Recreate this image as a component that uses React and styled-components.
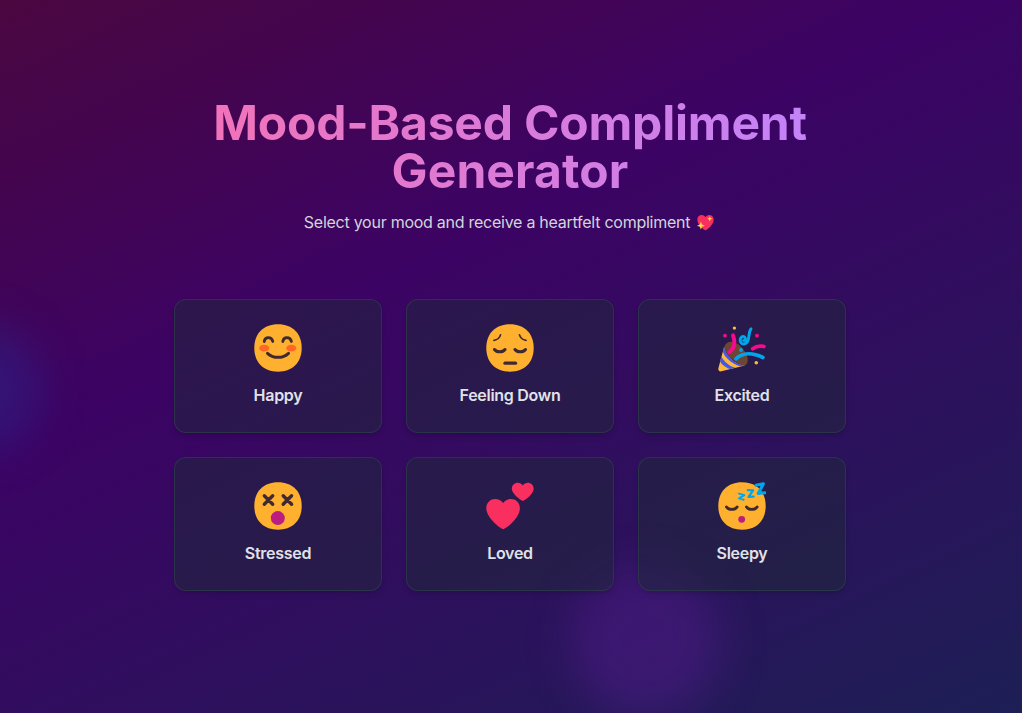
import React from "react";
import styled, { createGlobalStyle } from "styled-components";

const GlobalStyle = createGlobalStyle`
  *, *::before, *::after { box-sizing: border-box; }
  body { margin: 0; font-family: Inter, "Liberation Sans", sans-serif; }
  h1, p { margin: 0; }
`;

const Page = styled.div`
  position: relative;
  display: flex;
  flex-direction: column;
  align-items: center;
  height: 713px;
  padding-top: 99px;
  overflow: hidden;
  background: linear-gradient(155deg, #4a0740 0%, #3c0364 38%, #1d1f55 100%);
`;

const Glow = styled.div`
  position: absolute;
  left: ${(p) => p.$x}px;
  top: ${(p) => p.$y}px;
  width: ${(p) => p.$size}px;
  height: ${(p) => p.$size}px;
  border-radius: 50%;
  background: ${(p) => p.$color};
  filter: blur(${(p) => p.$blur}px);
`;

const Content = styled.main`
  position: relative;
  display: flex;
  flex-direction: column;
  align-items: center;
  width: 672px;
  margin-right: 2px;
`;

const Title = styled.h1`
  width: 100%;
  font-size: 48px;
  line-height: 48px;
  font-weight: 700;
  text-align: center;
  color: transparent;
  background: linear-gradient(to right, #f472b6, #c084fc);
  background-clip: text;
  -webkit-background-clip: text;
`;

const TitleLine = styled.span`
  display: block;
  white-space: nowrap;
  letter-spacing: ${(p) => p.$spacing}px;
`;

const Subtitle = styled.p`
  display: flex;
  align-items: center;
  gap: 7px;
  margin: 15px 2px 0 0;
  font-size: 16px;
  line-height: 24px;
  letter-spacing: -0.26px;
  white-space: nowrap;
  color: #d1d5db;
`;

const Grid = styled.div`
  display: grid;
  grid-template-columns: repeat(3, 208px);
  gap: 24px;
  margin-top: 65px;
`;

const Card = styled.button`
  display: flex;
  flex-direction: column;
  align-items: center;
  height: 134px;
  padding: 24px 0 0;
  border: 1px solid rgba(45, 62, 72, 0.72);
  border-radius: 12px;
  background: rgba(31, 41, 57, 0.52);
  box-shadow: 0 4px 6px -1px rgba(0, 0, 0, 0.1), 0 2px 4px -2px rgba(0, 0, 0, 0.1);
  font-family: inherit;
`;

const Label = styled.span`
  margin-top: 11px;
  font-size: 16px;
  line-height: 24px;
  font-weight: 600;
  letter-spacing: -0.28px;
  color: #e0e2e8;
`;

const Emoji = styled.svg`
  display: block;
  width: ${(p) => p.$size}px;
  height: ${(p) => p.$size}px;
  flex: none;
`;

const Face = () => (
  <path d="M24 .3C38.5.3 47.7 9.5 47.7 24S38.5 47.7 24 47.7.3 38.5.3 24 9.5.3 24 .3Z" fill="#ffb02e" />
);
const ink = { fill: "none", stroke: "#402a32", strokeLinecap: "round", strokeLinejoin: "round" };

const Happy = () => (
  <>
    <Face />
    <ellipse cx="10.2" cy="24.2" rx="5" ry="3.4" fill="#ff6723" />
    <ellipse cx="37.3" cy="24.2" rx="5" ry="3.4" fill="#ff6723" />
    <path d="M10.2 17.5c.8-5.2 7.5-5.2 8.6 0M28.8 17.5c.8-5.2 7.5-5.2 8.6 0" {...ink} strokeWidth="2.8" />
    <path d="M13.5 29.3c5.6 5.4 15.4 5.4 21 0" {...ink} strokeWidth="3" />
  </>
);

const Down = () => (
  <>
    <Face />
    <path d="M8 16.3c3.3-.5 5.7-2.3 6.5-5.4M40 16.3c-3.3-.5-5.7-2.3-6.5-5.4" {...ink} strokeWidth="1.7" />
    <path d="M8.5 25.5c2.3 3 8.2 3 10.5 0M29 25.5c2.3 3 8.2 3 10.5 0" {...ink} strokeWidth="3" />
    <path d="M19 39.2h10.5" {...ink} strokeWidth="3.3" />
  </>
);

const Excited = () => (
  <>
    <path d="M6.1 23.1C8.7 15.5 17 16.2 23.4 23s8.7 15.8 3.6 18.4C20 42 7 31 6.1 23.1Z" fill="#6d4534" />
    <path d="M6.1 23.1c.1 6.2 10 18.5 20.9 18.3L3.4 47.3C1.2 47.8-.2 46 .5 43.8Z" fill="#ffb83d" />
    <path d="M6.1 23.1c.4 5.9 9.8 18.2 20.9 18.3l-4.3 1.1C12.4 39.3 6.1 32.1 4.8 27.4ZM3.4 32.6C6 37.8 11.6 42.5 17.3 43.8l-5 1.3C7.1 43 3.2 40.3 2 36.9Z" fill="#4657e8" />
    <path d="M11.4 28.2c5.5-4.3 5.8-10.7 3.6-16.9" fill="none" stroke="#f70a8d" strokeWidth="3.9" strokeLinecap="round" />
    <path d="M18.1 34.8c6.7-6.6 17-6 26.8-1.3" fill="none" stroke="#00a6ed" strokeWidth="3.7" strokeLinecap="round" />
    <path d="M34.7 24.8c3.4-2.6 7.5-3.2 11.2-2.3" fill="none" stroke="#f70a8d" strokeWidth="3.7" strokeLinecap="round" />
    <path d="M33 4.8C30.3 8.2 31.5 13.5 29.8 17.2c-1.6 3.4-6.2 3.7-7.3.6-1.3-3.8 2.1-6.6 4.3-4.5 1.5 1.6.3 3.8-1.2 3.2" fill="none" stroke="#00a6ed" strokeWidth="2.9" strokeLinecap="round" strokeLinejoin="round" />
    <circle cx="16.4" cy="4.1" r="1.7" fill="#ffb83d" /><circle cx="38.3" cy="38.8" r="1.8" fill="#ffb83d" />
    <circle cx="7" cy="11.7" r="1.9" fill="#f70a8d" /><circle cx="39" cy="11.7" r="1.9" fill="#f70a8d" />
    <circle cx="23" cy="26" r="1.9" fill="#00a6ed" />
  </>
);

const Stressed = () => (
  <>
    <Face />
    <path d="m10.3 13.8 8.4 8.4m0-8.4-8.4 8.4M29.2 13.8l8.4 8.4m0-8.4-8.4 8.4" {...ink} strokeWidth="3.4" />
    <circle cx="23.8" cy="36.1" r="7" fill="#bb1d80" />
  </>
);

const Loved = () => (
  <>
    <path d="M17.2 47.3C12.4 45.4.3 34.9.3 26.3.3 16.2 12.2 14 17.1 21.1 22 14 33.9 16.2 33.9 26.3c0 8.6-11.6 19.2-16.7 21Z" fill="#f92f60" />
    <path d="M36.8 18.9C33.7 17.7 25.8 11.6 25.8 6.8c0-6.4 7.9-8.2 11-3.4C40-1.4 47.7.4 47.7 6.8c0 4.8-7.5 10.9-10.9 12.1Z" fill="#f92f60" />
  </>
);

const Sleepy = () => (
  <>
    <Face />
    <path d="M8.5 25c2.3 3.2 8.3 3.2 10.6 0M28.5 25c2.3 3.2 8.3 3.2 10.6 0" {...ink} strokeWidth="2.9" />
    <circle cx="23.7" cy="37.3" r="3.4" fill="#bb1d80" />
    <g fill="none" stroke="#00a6ed" strokeLinejoin="round" strokeLinecap="round">
      <path d="m21 11.6 5.4 1.5-5.4 3.3 4.7 1.4" strokeWidth="2" />
      <path d="m29.8 8.2 5.4.2-4.7 6.4 5.2-.2" strokeWidth="2.2" />
      <path d="m38 3.2 7.4-1.4-5.2 9.6 6.7-.7" strokeWidth="3.1" />
    </g>
  </>
);

const SparklingHeart = () => (
  <>
    <path d="M24 46C17 43 1 29 1 16 1 1 18-1 24 9 30-1 47 1 47 16c0 13-16 27-23 30Z" fill="#f92f60" />
    <path d="m11 22 3.3 7.7L22 33l-7.7 3.3L11 44l-3.3-7.7L0 33l7.7-3.3ZM36 6l2.2 5.3 5.3 2.2-5.3 2.2L36 21l-2.2-5.3-5.3-2.2 5.3-2.2Z" fill="#fcd53f" />
  </>
);

const moods = [
  { label: "Happy", Art: Happy },
  { label: "Feeling Down", Art: Down },
  { label: "Excited", Art: Excited },
  { label: "Stressed", Art: Stressed },
  { label: "Loved", Art: Loved },
  { label: "Sleepy", Art: Sleepy },
];

export default function App() {
  return (
    <Page>
      <GlobalStyle />
      <Glow $x={-88} $y={323} $size={130} $color="rgba(32, 52, 165, 0.33)" $blur={22} />
      <Glow $x={570} $y={566} $size={152} $color="rgba(126, 34, 190, 0.24)" $blur={22} />
      <Content>
        <Title>
          <TitleLine $spacing={-0.2}>Mood-Based Compliment</TitleLine>
          <TitleLine $spacing={0.1}>Generator</TitleLine>
        </Title>
        <Subtitle>
          Select your mood and receive a heartfelt compliment
          <Emoji $size={17} viewBox="0 0 48 48"><SparklingHeart /></Emoji>
        </Subtitle>
        <Grid>
          {moods.map(({ label, Art }) => (
            <Card key={label} type="button">
              <Emoji $size={48} viewBox="0 0 48 48"><Art /></Emoji>
              <Label>{label}</Label>
            </Card>
          ))}
        </Grid>
      </Content>
    </Page>
  );
}
